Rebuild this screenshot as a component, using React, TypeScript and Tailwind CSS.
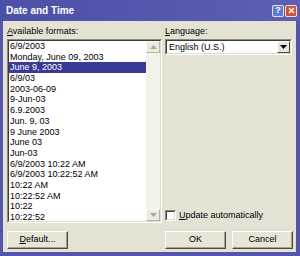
import React from "react";

const items = [
  "6/9/2003",
  "Monday, June 09, 2003",
  "June 9, 2003",
  "6/9/03",
  "2003-06-09",
  "9-Jun-03",
  "6.9.2003",
  "Jun. 9, 03",
  "9 June 2003",
  "June 03",
  "Jun-03",
  "6/9/2003 10:22 AM",
  "6/9/2003 10:22:52 AM",
  "10:22 AM",
  "10:22:52 AM",
  "10:22",
  "10:22:52",
];

function Btn({ children, className = "" }: { children: React.ReactNode; className?: string }) {
  return (
    <div
      className={
        "h-[18px] flex items-center justify-center border border-t-white border-l-white border-r-[#4a4a4a] border-b-[#4a4a4a] shadow-[inset_-1px_-1px_0_#a3a294] bg-[#e6e5d6] text-[9px] text-black " +
        className
      }
    >
      {children}
    </div>
  );
}

function ScrollArrow({ up }: { up?: boolean }) {
  return (
    <div className="h-[12px] w-full flex items-center justify-center bg-[#ecebe0] border border-t-[#fbfbf6] border-l-[#fbfbf6] border-r-[#b5b4a6] border-b-[#b5b4a6]">
      <svg width="7" height="4" viewBox="0 0 7 4">
        {up ? <path d="M0 4 L3.5 0 L7 4 Z" fill="#a8a79a" /> : <path d="M0 0 L3.5 4 L7 0 Z" fill="#a8a79a" />}
      </svg>
    </div>
  );
}

export default function App() {
  return (
    <div className="w-[300px] h-[256px] flex flex-col bg-[#5356aa] overflow-hidden font-['Liberation_Sans',Arial,sans-serif]">
      {/* Title bar */}
      <div className="h-[21px] flex items-center pl-[6px] pr-[3px] bg-linear-to-r from-[#4b50a7] to-[#5c5fb3]">
        <span className="text-white font-bold text-[10px] leading-none">Date and Time</span>
        <div className="ml-auto flex gap-[1px]">
          <div className="w-[12px] h-[12px] rounded-[2px] border border-white/80 bg-[#5d7bd3] flex items-center justify-center text-white text-[9px] font-bold leading-none">
            ?
          </div>
          <div className="w-[12px] h-[12px] rounded-[2px] border border-white/80 bg-[#d5502f] flex items-center justify-center">
            <svg width="7" height="7" viewBox="0 0 7 7">
              <path d="M1 1 L6 6 M6 1 L1 6" stroke="white" strokeWidth="1.6" />
            </svg>
          </div>
        </div>
      </div>

      {/* Body */}
      <div className="flex-1 ml-[3px] mr-[4px] mb-[4px] bg-[#e4e3d3] flex flex-row pt-[5px] pl-[4px] pr-[3px] pb-[3px] gap-[3px] text-black">
        {/* Left column */}
        <div className="w-[155px] flex flex-col">
          <div className="h-[11px] text-[9px] leading-[11px]">
            <span className="underline">A</span>vailable formats:
          </div>
          <div className="mt-[2px] h-[184px] border border-t-[#8a8a80] border-l-[#8a8a80] border-b-white border-r-white">
            <div className="h-full border border-t-[#3c3c3c] border-l-[#3c3c3c] border-b-[#dcdbcc] border-r-[#dcdbcc] bg-white flex overflow-hidden">
              <div className="flex-1 flex flex-col overflow-hidden">
                {items.map((it, i) => (
                  <div
                    key={i}
                    className={
                      "h-[10.7px] shrink-0 leading-[10.7px] text-[9px] pl-[1px] whitespace-nowrap " +
                      (i === 2 ? "bg-[#393996] text-white" : "text-black")
                    }
                  >
                    {it}
                  </div>
                ))}
              </div>
              <div className="w-[14px] flex flex-col bg-[#f3f2ea]">
                <ScrollArrow up />
                <div className="flex-1" />
                <ScrollArrow />
              </div>
            </div>
          </div>
          <Btn className="mt-[8px] w-[61px]">
            <span>
              <span className="underline">D</span>efault...
            </span>
          </Btn>
        </div>

        {/* Right column */}
        <div className="w-[128px] flex flex-col">
          <div className="h-[11px] text-[9px] leading-[11px]">
            <span className="underline">L</span>anguage:
          </div>
          <div className="mt-[2px] h-[16px] w-[127px] border border-t-[#8a8a80] border-l-[#8a8a80] border-b-white border-r-white">
            <div className="h-full border border-t-[#3c3c3c] border-l-[#3c3c3c] border-b-[#dcdbcc] border-r-[#dcdbcc] bg-white flex items-center">
              <span className="pl-[2px] text-[9px] leading-none">English (U.S.)</span>
              <div className="ml-auto h-full w-[13px] flex items-center justify-center bg-[#e6e5d6] border border-t-white border-l-white border-r-[#4a4a4a] border-b-[#4a4a4a]">
                <svg width="7" height="4" viewBox="0 0 7 4">
                  <path d="M0 0 L3.5 4 L7 0 Z" fill="#000" />
                </svg>
              </div>
            </div>
          </div>
          <div className="flex-1" />
          <div className="h-[11px] flex items-center">
            <div className="w-[11px] h-[11px] border border-t-[#8a8a80] border-l-[#8a8a80] border-b-white border-r-white">
              <div className="w-full h-full bg-white border border-t-[#3c3c3c] border-l-[#3c3c3c] border-b-[#dcdbcc] border-r-[#dcdbcc]" />
            </div>
            <span className="ml-[3px] text-[9px] leading-none">
              <span className="underline">U</span>pdate automatically
            </span>
          </div>
          <div className="mt-[10px] flex gap-[6px]">
            <Btn className="w-[61px]">OK</Btn>
            <Btn className="w-[61px]">Cancel</Btn>
          </div>
        </div>
      </div>
    </div>
  );
}
